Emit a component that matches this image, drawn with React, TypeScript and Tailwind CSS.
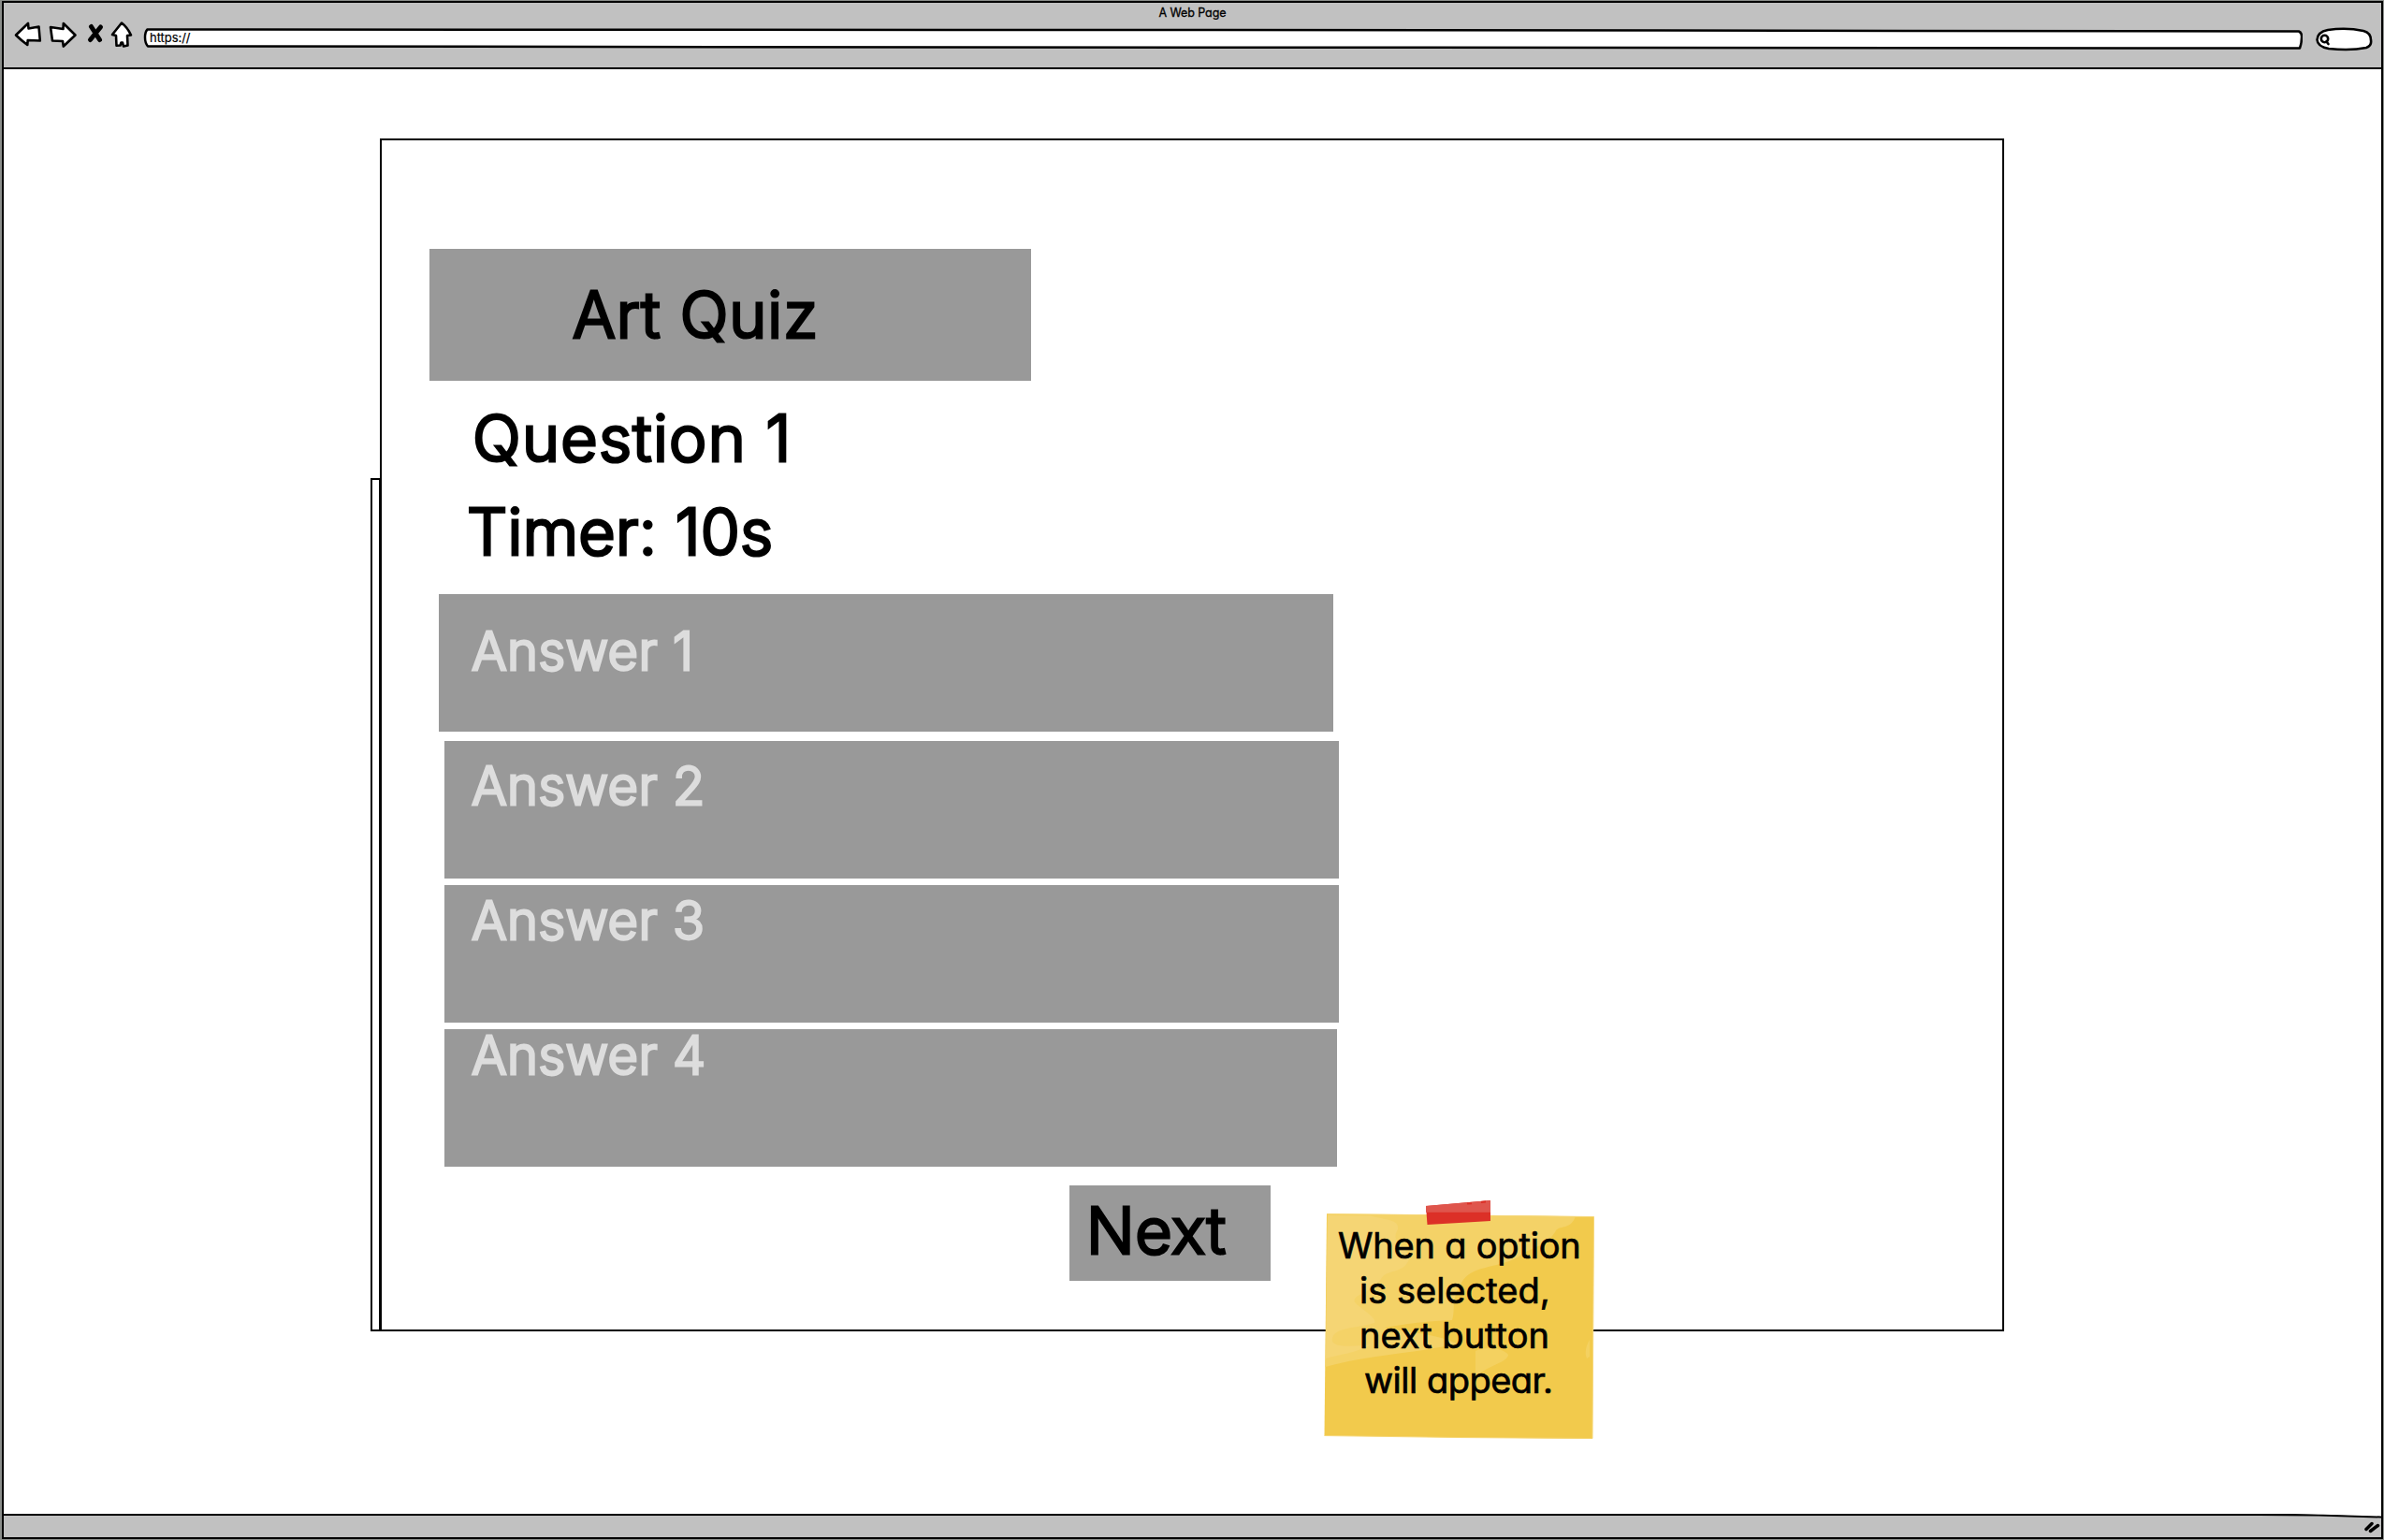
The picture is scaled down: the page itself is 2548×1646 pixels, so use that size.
import React from "react";

const HEADING = "block whitespace-pre text-[68px] leading-[72px] font-light [-webkit-text-stroke:3.2px_#000] [stroke-linejoin:round]";
const ANSWER =
  "block whitespace-pre text-[56px] leading-[60px] font-light tracking-[0.35px] text-[#dddddd] [-webkit-text-stroke:2.8px_#dddddd] [stroke-linejoin:round]";
const NOTE_LINE = "block whitespace-pre text-[38px] leading-[48px] font-normal [-webkit-text-stroke:0.7px_#000]";

function NavIcons() {
  return (
    <svg className="ml-[12px] mt-[20px] h-[32px] w-[134px] shrink-0" viewBox="15 20 134 32" fill="#fff" stroke="#000" strokeWidth="2.6" strokeLinejoin="round" strokeLinecap="round">
      <path d="M17 37.5 L30 25 L30.5 30.5 L41.5 28.5 L42.8 43.5 L29.7 43 L29.3 48 Q22 42.500 17 37.500 Z" />
      <path d="M54 29 L67.500 31 L67.800 25 L80.500 37.500 L67.800 49.500 L67 44 L56 43.500 Z" />
      <g fill="none" strokeWidth="5">
        <path d="M97.500 28.500 L106.500 42.500" />
        <path d="M107.500 29 L96.500 42.500" />
      </g>
      <path d="M130 24.500 L120 37 L124 38 L124.500 48.800 L128.500 48.500 L129.500 45.500 L131 45.500 L132 49.500 L136.500 48.500 L136 38 L140 37.500 Q136 29 130 24.500 Z" />
    </svg>
  );
}

function AddressField() {
  return (
    <div className="relative ml-[3px] mt-[29px] h-[24px] w-[2309px] shrink-0">
      <svg className="absolute inset-0 h-full w-full" viewBox="152 29 2309 24" fill="#fff" stroke="#000" strokeWidth="2.5" strokeLinejoin="round">
        <path d="M157.500 31.500 L1300 32 L2457 33.500 Q2460.500 35 2460 40 Q2460 46 2458 51.500 L1300 50.700 L158 49.500 Q155 46 155 40 Q155 34 157.500 31.500 Z" />
      </svg>
      <span className="relative ml-[8px] mt-[3px] block text-[13px] leading-[16px] tracking-[-0.05px] [-webkit-text-stroke:0.2px_#000]">https://</span>
    </div>
  );
}

function SearchField() {
  return (
    <svg className="ml-[13px] mt-[28px] h-[28px] w-[62px] shrink-0" viewBox="2474 27 62 28" fill="#fff" stroke="#000" strokeWidth="2.6" strokeLinecap="round">
      <path d="M2488 31 Q2508 28 2526 32 Q2534 34 2534 42 Q2535 48 2529 50 Q2512 53.500 2489 51 Q2477 49 2476.500 41.500 Q2477 33 2488 31 Z" />
      <circle cx="2484.500" cy="40.500" r="3.700" fill="none" />
      <path d="M2486.500 43.500 L2488.500 46" />
    </svg>
  );
}

function StickyNote() {
  return (
    <div className="absolute left-[1404px] top-[1204px] h-[264px] w-[300px]">
      <svg className="absolute inset-0 h-full w-full" viewBox="1408 1278 300 264">
        <path fill="#f2ca4c" d="M1418 1297.500 L1560 1298.500 L1703.500 1300.500 L1702 1537.700 L1560 1536.500 L1415.500 1534.500 Z" />
        <path fill="#f4d267" d="M1418.500 1298 L1684 1300 C1678 1316 1666 1308 1662 1317 C1650 1335 1640 1330 1622 1344 C1600 1356 1572 1352 1562 1371 C1550 1390 1556 1400 1552 1411 C1530 1412 1505 1414 1480 1419 C1500 1424 1530 1424 1557 1436 C1520 1446 1460 1448 1416.500 1461 Z" />
        <path fill="#f5d574" d="M1419 1299 L1465 1299.500 C1480 1304 1496 1303 1494 1314 C1484 1330 1508 1334 1506 1346 C1500 1362 1482 1356 1476 1367 C1464 1384 1440 1384 1450 1394 C1460 1402 1472 1410 1469 1414 C1450 1420 1428 1418 1424 1430 C1421 1440 1440 1440 1466 1437 C1450 1446 1430 1448 1417 1452 Z" />
        <path fill="#f4d160" d="M1577 1444 C1590 1438 1608 1442 1612 1448 C1612 1457 1580 1462 1577 1475 Z" />
        <path fill="#f4d160" d="M1699 1432 C1694 1440 1694 1448 1696 1452 L1699 1450 Z" />
        <path fill="none" stroke="#f6d778" strokeWidth="1" d="M1418 1297.500 L1703.500 1300.500 L1702 1537.500 L1560 1536.500 L1415.500 1534.500" />
        <path fill="#dc3027" d="M1524 1289 L1593 1283 L1593 1305 L1525.500 1309 Z" />
        <path fill="#df554c" d="M1524 1289 L1593 1283 L1593 1295.800 L1524 1295.800 Z" />
        <path stroke="#dc3027" strokeWidth="2" d="M1568 1286.500 L1573 1286.200 M1583 1285 L1588 1284.600" />
      </svg>
      <p className="relative pt-[29px]">
        <span className={`${NOTE_LINE} ml-[22px] tracking-[-0.2px]`}>When a option</span>
        <span className={`${NOTE_LINE} ml-[45px]`}>is selected,</span>
        <span className={`${NOTE_LINE} ml-[45px]`}>next button</span>
        <span className={`${NOTE_LINE} ml-[50px] tracking-[-0.5px]`}>will appear.</span>
      </p>
    </div>
  );
}

export default function App() {
  return (
    <div className="h-[1646px] w-[2548px] overflow-hidden bg-[#8b8e8b] pt-px pl-[2px] pr-px pb-px font-['Inter',sans-serif] text-black [font-feature-settings:'cv11']">
      <div className="flex h-[1644px] w-[2545px] flex-col border-2 border-black bg-white">
        <header className="relative flex h-[71px] shrink-0 items-start border-b-2 border-black bg-[#c1c1c1]">
          <div className="-mt-[3px] -ml-[4px] flex">
            <div className="pl-[3px]">
              <NavIcons />
            </div>
            <AddressField />
            <SearchField />
          </div>
          <h1 className="absolute inset-x-0 top-[3px] text-center text-[12.500px] leading-[16px] tracking-[-0.1px] [-webkit-text-stroke:0.3px_#000]">A Web Page</h1>
        </header>

        <main className="relative flex-1">
          <div className="absolute left-[392px] top-[437px] h-[912px] w-[11px] border-2 border-black" />
          <section className="relative ml-[402px] mt-[74px] h-[1275px] w-[1736px] border-2 border-black bg-white">
            <div className="ml-[51px] mt-[116px] flex h-[141px] w-[643px] items-start bg-[#999999]">
              <h2 className={`${HEADING} ml-[153px] mt-[34px] tracking-[1px]`}>Art Quiz</h2>
            </div>
            <p className={`${HEADING} ml-[97px] mt-[25px] tracking-[1.3px]`}>Question 1</p>
            <p className={`${HEADING} ml-[91px] mt-[28px] tracking-[0.3px]`}>Timer: 10s</p>
            <ul className="mt-[31px]">
              <li className="ml-[61px] flex h-[147px] w-[956px] items-start bg-[#999999]">
                <span className={`${ANSWER} ml-[35px] mt-[31px]`}>Answer 1</span>
              </li>
              <li className="ml-[67px] mt-[10px] flex h-[147px] w-[956px] items-start bg-[#999999]">
                <span className={`${ANSWER} ml-[29px] mt-[18px]`}>Answer 2</span>
              </li>
              <li className="ml-[67px] mt-[7px] flex h-[147px] w-[956px] items-start bg-[#999999]">
                <span className={`${ANSWER} ml-[29px] mt-[8px]`}>Answer 3</span>
              </li>
              <li className="ml-[67px] mt-[7px] flex h-[147px] w-[954px] items-start bg-[#999999]">
                <span className={`${ANSWER} ml-[29px] -mt-[2px]`}>Answer 4</span>
              </li>
            </ul>
            <button className="ml-[735px] mt-[20px] flex h-[102px] w-[215px] items-start bg-[#999999] text-left">
              <span className={`${HEADING} ml-[18px] mt-[12px] tracking-[0.7px]`}>Next</span>
            </button>
          </section>
          <StickyNote />
        </main>

        <footer className="flex h-[25px] shrink-0 items-start justify-end border-t-2 border-black bg-[#c1c1c1]">
          <svg className="-mt-[2px] h-[24px] w-[200px]" viewBox="0 0 200 24" fill="none" stroke="#000" strokeLinecap="round">
            <path fill="#fff" stroke="none" d="M100 0 L200 0 L200 3 Z" />
            <path strokeWidth="2" d="M60 1 Q130 0.800 200 3.500" />
            <path strokeWidth="3.500" d="M184 16.500 L190 10.500 M188.500 18.500 L196.500 12.500" />
          </svg>
        </footer>
      </div>
    </div>
  );
}
